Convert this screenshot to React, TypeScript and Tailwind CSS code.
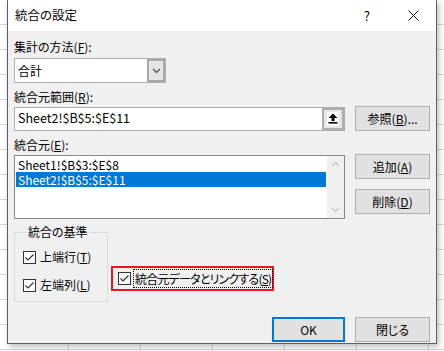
import React from 'react';

const font = "font-['Noto_Sans_CJK_JP','Noto_Sans',sans-serif] [font-feature-settings:'palt']";

const Check = () => (
  <span className="flex h-[13px] w-[13px] shrink-0 items-center justify-center border border-[#333333] bg-white">
    <svg width="11" height="11" viewBox="0 0 11 11">
      <polyline points="1.5,5.5 4,8 9.5,2.5" fill="none" stroke="#333333" strokeWidth="1.2" />
    </svg>
  </span>
);

const Btn = ({ children, primary }: { children: React.ReactNode; primary?: boolean }) => (
  <div
    className={
      'flex h-[25px] items-center justify-center whitespace-nowrap bg-[#e1e1e1] text-[12px] text-black ' +
      (primary ? 'w-[73px] border-2 border-[#0078d7]' : 'w-[75px] border border-[#adadad]')
    }
  >
    {children}
  </div>
);

const Chevron = ({ up, color }: { up?: boolean; color: string }) => (
  <svg width="9" height="6" viewBox="0 0 9 6">
    <polyline
      points={up ? '1,5 4.5,1.5 8,5' : '1,1 4.5,4.5 8,1'}
      fill="none"
      stroke={color}
      strokeWidth="1.1"
    />
  </svg>
);

const App = () => {
  return (
    <div
      className={`relative h-[351px] w-[444px] overflow-hidden bg-white bg-[linear-gradient(to_right,#d6d6d6_1px,transparent_1px),linear-gradient(to_bottom,#d6d6d6_1px,transparent_1px)] bg-[length:72px_25px] bg-[position:68px_24px] ${font}`}
    >
      {/* dialog window */}
      <div className="ml-[7px] flex h-[344px] w-[430px] flex-col border-x border-b border-[#5f5f5f] shadow-[2px_3px_6px_rgba(0,0,0,0.25)]">
        {/* title bar */}
        <div className="flex h-[31px] items-center bg-white text-[12.5px] text-black">
          <span className="ml-[7px]">統合の設定</span>
          <span className="ml-auto mr-[38px] text-[13px]">?</span>
          <svg width="11" height="11" viewBox="0 0 11 11" className="mr-[17px]">
            <path d="M0.5,0.5 L10.5,10.5 M10.5,0.5 L0.5,10.5" stroke="#111" strokeWidth="1" />
          </svg>
        </div>

        {/* body */}
        <div className="flex flex-1 flex-col bg-[#f0f0f0] px-[6px] text-[12px] text-black">
          <div className="mt-[8px] flex h-[16px] items-center whitespace-nowrap">
            集計の方法(<span className="underline">F</span>):
          </div>

          {/* combo */}
          <div className="mt-[3px] flex h-[25px] w-[152px] border border-[#adadad] bg-white">
            <div className="flex flex-1 items-center pl-[3px]">合計</div>
            <div className="flex w-[18px] items-center justify-center border-2 border-[#a8a8a8] bg-[#e5e5e5]">
              <Chevron color="#444" />
            </div>
          </div>

          <div className="mt-[6px] flex h-[16px] items-center whitespace-nowrap">
            統合元範囲(<span className="underline">R</span>):
          </div>

          {/* reference field */}
          <div className="mt-[1px] flex h-[25px] items-center gap-[10px]">
            <div className="flex h-[24px] w-[332px] border border-[#adadad] bg-white">
              <div className="flex flex-1 items-center pl-[3px] text-[12.5px]">Sheet2!$B$5:$E$11</div>
              <div className="flex w-[22px] items-center justify-center border-2 border-[#adadad] bg-[#e6e6e6]">
                <span className="flex h-[14px] w-[12px] items-center justify-center bg-white">
                  <svg width="10" height="11" viewBox="0 0 10 11">
                    <path d="M5,0.5 L9.5,5 L6.5,5 L6.5,8 L3.5,8 L3.5,5 L0.5,5 Z" fill="#000" />
                    <rect x="0.5" y="9" width="9" height="1.6" fill="#000" />
                  </svg>
                </span>
              </div>
            </div>
            <Btn>
              参照(<span className="underline">B</span>)...
            </Btn>
          </div>

          <div className="mt-[6px] flex h-[16px] items-center whitespace-nowrap">
            統合元(<span className="underline">E</span>):
          </div>

          {/* list + buttons */}
          <div className="mt-[1px] flex items-start gap-[10px]">
            <div className="mt-[1px] flex h-[64px] w-[332px] border border-[#828790] bg-white">
              <div className="flex flex-1 flex-col p-[1px] text-[12px] leading-[15px]">
                <div className="h-[15px] pl-[2px]">Sheet1!$B$3:$E$8</div>
                <div className="h-[15px] bg-[#0078d7] pl-[2px] text-white">Sheet2!$B$5:$E$11</div>
              </div>
              <div className="flex w-[17px] flex-col items-center justify-between bg-[#f0f0f0] py-[5px]">
                <Chevron up color="#c2c2c2" />
                <Chevron color="#c2c2c2" />
              </div>
            </div>
            <div className="flex flex-col gap-[10px]">
              <Btn>
                追加(<span className="underline">A</span>)
              </Btn>
              <Btn>
                削除(<span className="underline">D</span>)
              </Btn>
            </div>
          </div>

          {/* group + link option */}
          <div className="mt-[6px] flex items-start">
            <fieldset className="w-[94px] border border-[#dcdcdc] pb-[7px] pl-[8px]">
              <legend className="ml-[4px] whitespace-nowrap px-[1px] text-[12px] leading-[14px]">統合の基準</legend>
              <div className="mt-[9px] flex items-center gap-[4px] whitespace-nowrap">
                <Check />
                <span>
                  上端行(<span className="underline">T</span>)
                </span>
              </div>
              <div className="mt-[10px] flex items-center gap-[4px] whitespace-nowrap">
                <Check />
                <span>
                  左端列(<span className="underline">L</span>)
                </span>
              </div>
            </fieldset>
            <div className="ml-[3px] mt-[41px] flex h-[25px] w-[163px] items-center border-2 border-[#e8161f] pl-[5px]">
              <Check />
              <span className="ml-[2px] flex h-[19px] items-center whitespace-nowrap border border-dotted border-black px-[1px] tracking-[-0.8px]">
                統合元データとリンクする(<span className="underline">S</span>)
              </span>
            </div>
          </div>

          {/* dialog buttons */}
          <div className="mt-[15px] flex justify-end gap-[10px]">
            <Btn primary>OK</Btn>
            <Btn>閉じる</Btn>
          </div>
        </div>
      </div>
    </div>
  );
};

export default App;
